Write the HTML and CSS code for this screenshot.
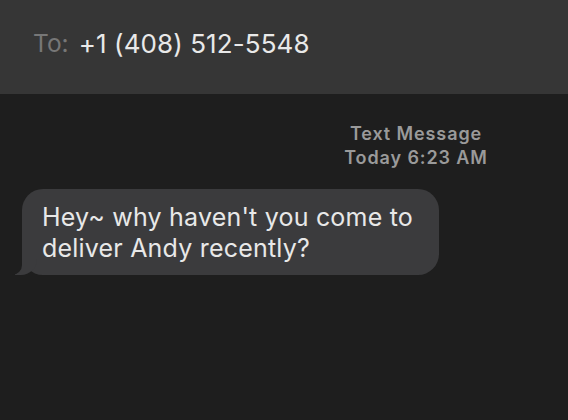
FILE: index.html
```html
<!DOCTYPE html>
<html lang="en">
<head>
    <meta charset="UTF-8">
    <meta name="viewport" content="width=device-width, initial-scale=1.0">
    <title>Messages</title>
    <link rel="stylesheet" href="styles.css">
</head>
<body>
    <header class="to-bar">
        <span class="to-label">To:</span>
        <span class="recipient">+1 (408) 512-5548</span>
    </header>
    <main class="thread">
        <div class="stamp">
            <div>Text Message</div>
            <div>Today 6:23 AM</div>
        </div>
        <div class="bubble">Hey~ why haven't you come to deliver Andy recently?</div>
    </main>
</body>
</html>
```

FILE: styles.css
```css
body {
    margin: 0;
    padding: 0;
    font-family: Inter, 'Liberation Sans', sans-serif;
    background-color: #1e1e1e;
    min-height: 100vh;
}

.to-bar {
    height: 94px;
    box-sizing: border-box;
    background-color: #363636;
    display: flex;
    align-items: center;
    padding: 0 0 8px 33px;
    font-size: 24.5px;
}
.to-label {
    color: #777777;
    margin-right: 10px;
}
.recipient {
    color: #e9e9e9;
    font-size: 26px;
    letter-spacing: 0.1px;
}

.thread {
    padding-top: 28px;
}
.stamp {
    padding-left: 264px;
    text-align: center;
    color: #9a9a9a;
    font-size: 18px;
    font-weight: 600;
    letter-spacing: 0.9px;
    line-height: 24px;
}
.bubble {
    position: relative;
    box-sizing: border-box;
    width: 417px;
    margin: 19px 0 0 22px;
    padding: 13px 20px 11px;
    background-color: #3b3b3d;
    border-radius: 21px;
    color: #e8e8e8;
    font-size: 25px;
    letter-spacing: 0.2px;
    line-height: 31px;
}
.bubble::before {
    content: "";
    position: absolute;
    bottom: 0;
    left: -7px;
    width: 22px;
    height: 22px;
    background-color: #3b3b3d;
    border-bottom-right-radius: 16px;
}
.bubble::after {
    content: "";
    position: absolute;
    bottom: 0;
    left: -12px;
    width: 12px;
    height: 22px;
    background-color: #1e1e1e;
    border-bottom-right-radius: 10px;
}
```
